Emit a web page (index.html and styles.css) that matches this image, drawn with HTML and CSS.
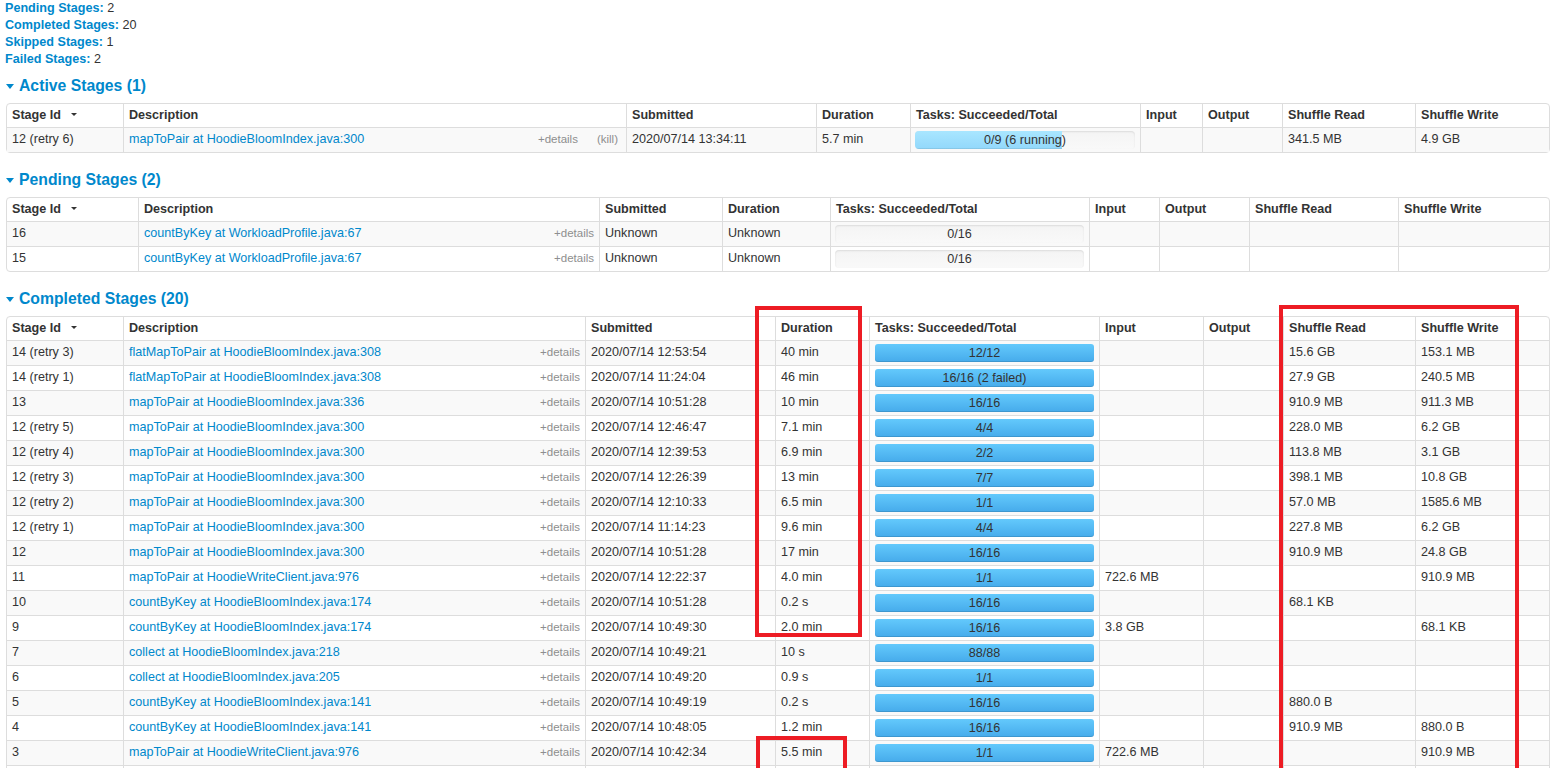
FILE: index.html
```html
<!DOCTYPE html>
<html lang="en">
<head>
<meta charset="utf-8">
<title>Stages</title>
<link rel="stylesheet" href="styles.css">
</head>
<body>
<div class="page">
  <ul class="summary">
    <li><a class="lbl">Pending Stages:</a> 2</li>
    <li><a class="lbl">Completed Stages:</a> 20</li>
    <li><a class="lbl">Skipped Stages:</a> 1</li>
    <li><a class="lbl">Failed Stages:</a> 2</li>
  </ul>

  <h4 class="sec"><span class="caret"></span>Active Stages (1)</h4>
  <table class="stages t-active">
    <thead>
      <tr><th>Stage Id<span class="sort"></span></th><th>Description</th><th>Submitted</th><th>Duration</th><th>Tasks: Succeeded/Total</th><th>Input</th><th>Output</th><th>Shuffle Read</th><th>Shuffle Write</th></tr>
    </thead>
    <tbody>
      <tr><td>12 (retry 6)</td><td class="desc kill-cell"><div class="dw"><a>mapToPair at HoodieBloomIndex.java:300</a><span class="details">+details</span><span class="kill">(kill)</span></div></td><td>2020/07/14 13:34:11</td><td>5.7 min</td><td class="pc"><div class="progress"><div class="fill-run" style="width:66.7%"></div><span class="ptxt">0/9 (6 running)</span></div></td><td></td><td></td><td>341.5 MB</td><td>4.9 GB</td></tr>
    </tbody>
  </table>

  <h4 class="sec"><span class="caret"></span>Pending Stages (2)</h4>
  <table class="stages t-pending">
    <thead>
      <tr><th>Stage Id<span class="sort"></span></th><th>Description</th><th>Submitted</th><th>Duration</th><th>Tasks: Succeeded/Total</th><th>Input</th><th>Output</th><th>Shuffle Read</th><th>Shuffle Write</th></tr>
    </thead>
    <tbody>
      <tr><td>16</td><td class="desc"><div class="dw"><a>countByKey at WorkloadProfile.java:67</a><span class="details">+details</span></div></td><td>Unknown</td><td>Unknown</td><td class="pc"><div class="progress"><span class="ptxt">0/16</span></div></td><td></td><td></td><td></td><td></td></tr>
      <tr><td>15</td><td class="desc"><div class="dw"><a>countByKey at WorkloadProfile.java:67</a><span class="details">+details</span></div></td><td>Unknown</td><td>Unknown</td><td class="pc"><div class="progress"><span class="ptxt">0/16</span></div></td><td></td><td></td><td></td><td></td></tr>
    </tbody>
  </table>

  <h4 class="sec"><span class="caret"></span>Completed Stages (20)</h4>
  <table class="stages t-completed">
    <thead>
      <tr><th>Stage Id<span class="sort"></span></th><th>Description</th><th>Submitted</th><th>Duration</th><th>Tasks: Succeeded/Total</th><th>Input</th><th>Output</th><th>Shuffle Read</th><th>Shuffle Write</th></tr>
    </thead>
    <tbody>
      <tr><td>14 (retry 3)</td><td class="desc"><div class="dw"><a>flatMapToPair at HoodieBloomIndex.java:308</a><span class="details">+details</span></div></td><td>2020/07/14 12:53:54</td><td>40 min</td><td class="pc"><div class="progress done"><span class="ptxt">12/12</span></div></td><td></td><td></td><td>15.6 GB</td><td>153.1 MB</td></tr>
      <tr><td>14 (retry 1)</td><td class="desc"><div class="dw"><a>flatMapToPair at HoodieBloomIndex.java:308</a><span class="details">+details</span></div></td><td>2020/07/14 11:24:04</td><td>46 min</td><td class="pc"><div class="progress done"><span class="ptxt">16/16 (2 failed)</span></div></td><td></td><td></td><td>27.9 GB</td><td>240.5 MB</td></tr>
      <tr><td>13</td><td class="desc"><div class="dw"><a>mapToPair at HoodieBloomIndex.java:336</a><span class="details">+details</span></div></td><td>2020/07/14 10:51:28</td><td>10 min</td><td class="pc"><div class="progress done"><span class="ptxt">16/16</span></div></td><td></td><td></td><td>910.9 MB</td><td>911.3 MB</td></tr>
      <tr><td>12 (retry 5)</td><td class="desc"><div class="dw"><a>mapToPair at HoodieBloomIndex.java:300</a><span class="details">+details</span></div></td><td>2020/07/14 12:46:47</td><td>7.1 min</td><td class="pc"><div class="progress done"><span class="ptxt">4/4</span></div></td><td></td><td></td><td>228.0 MB</td><td>6.2 GB</td></tr>
      <tr><td>12 (retry 4)</td><td class="desc"><div class="dw"><a>mapToPair at HoodieBloomIndex.java:300</a><span class="details">+details</span></div></td><td>2020/07/14 12:39:53</td><td>6.9 min</td><td class="pc"><div class="progress done"><span class="ptxt">2/2</span></div></td><td></td><td></td><td>113.8 MB</td><td>3.1 GB</td></tr>
      <tr><td>12 (retry 3)</td><td class="desc"><div class="dw"><a>mapToPair at HoodieBloomIndex.java:300</a><span class="details">+details</span></div></td><td>2020/07/14 12:26:39</td><td>13 min</td><td class="pc"><div class="progress done"><span class="ptxt">7/7</span></div></td><td></td><td></td><td>398.1 MB</td><td>10.8 GB</td></tr>
      <tr><td>12 (retry 2)</td><td class="desc"><div class="dw"><a>mapToPair at HoodieBloomIndex.java:300</a><span class="details">+details</span></div></td><td>2020/07/14 12:10:33</td><td>6.5 min</td><td class="pc"><div class="progress done"><span class="ptxt">1/1</span></div></td><td></td><td></td><td>57.0 MB</td><td>1585.6 MB</td></tr>
      <tr><td>12 (retry 1)</td><td class="desc"><div class="dw"><a>mapToPair at HoodieBloomIndex.java:300</a><span class="details">+details</span></div></td><td>2020/07/14 11:14:23</td><td>9.6 min</td><td class="pc"><div class="progress done"><span class="ptxt">4/4</span></div></td><td></td><td></td><td>227.8 MB</td><td>6.2 GB</td></tr>
      <tr><td>12</td><td class="desc"><div class="dw"><a>mapToPair at HoodieBloomIndex.java:300</a><span class="details">+details</span></div></td><td>2020/07/14 10:51:28</td><td>17 min</td><td class="pc"><div class="progress done"><span class="ptxt">16/16</span></div></td><td></td><td></td><td>910.9 MB</td><td>24.8 GB</td></tr>
      <tr><td>11</td><td class="desc"><div class="dw"><a>mapToPair at HoodieWriteClient.java:976</a><span class="details">+details</span></div></td><td>2020/07/14 12:22:37</td><td>4.0 min</td><td class="pc"><div class="progress done"><span class="ptxt">1/1</span></div></td><td>722.6 MB</td><td></td><td></td><td>910.9 MB</td></tr>
      <tr><td>10</td><td class="desc"><div class="dw"><a>countByKey at HoodieBloomIndex.java:174</a><span class="details">+details</span></div></td><td>2020/07/14 10:51:28</td><td>0.2 s</td><td class="pc"><div class="progress done"><span class="ptxt">16/16</span></div></td><td></td><td></td><td>68.1 KB</td><td></td></tr>
      <tr><td>9</td><td class="desc"><div class="dw"><a>countByKey at HoodieBloomIndex.java:174</a><span class="details">+details</span></div></td><td>2020/07/14 10:49:30</td><td>2.0 min</td><td class="pc"><div class="progress done"><span class="ptxt">16/16</span></div></td><td>3.8 GB</td><td></td><td></td><td>68.1 KB</td></tr>
      <tr><td>7</td><td class="desc"><div class="dw"><a>collect at HoodieBloomIndex.java:218</a><span class="details">+details</span></div></td><td>2020/07/14 10:49:21</td><td>10 s</td><td class="pc"><div class="progress done"><span class="ptxt">88/88</span></div></td><td></td><td></td><td></td><td></td></tr>
      <tr><td>6</td><td class="desc"><div class="dw"><a>collect at HoodieBloomIndex.java:205</a><span class="details">+details</span></div></td><td>2020/07/14 10:49:20</td><td>0.9 s</td><td class="pc"><div class="progress done"><span class="ptxt">1/1</span></div></td><td></td><td></td><td></td><td></td></tr>
      <tr><td>5</td><td class="desc"><div class="dw"><a>countByKey at HoodieBloomIndex.java:141</a><span class="details">+details</span></div></td><td>2020/07/14 10:49:19</td><td>0.2 s</td><td class="pc"><div class="progress done"><span class="ptxt">16/16</span></div></td><td></td><td></td><td>880.0 B</td><td></td></tr>
      <tr><td>4</td><td class="desc"><div class="dw"><a>countByKey at HoodieBloomIndex.java:141</a><span class="details">+details</span></div></td><td>2020/07/14 10:48:05</td><td>1.2 min</td><td class="pc"><div class="progress done"><span class="ptxt">16/16</span></div></td><td></td><td></td><td>910.9 MB</td><td>880.0 B</td></tr>
      <tr><td>3</td><td class="desc"><div class="dw"><a>mapToPair at HoodieWriteClient.java:976</a><span class="details">+details</span></div></td><td>2020/07/14 10:42:34</td><td>5.5 min</td><td class="pc"><div class="progress done"><span class="ptxt">1/1</span></div></td><td>722.6 MB</td><td></td><td></td><td>910.9 MB</td></tr>
      <tr class="tail"><td></td><td></td><td></td><td></td><td></td><td></td><td></td><td></td><td></td></tr>
    </tbody>
  </table>

  <div class="mark mark-dur"></div>
  <div class="mark mark-dur2"></div>
  <div class="mark mark-shuffle"></div>
</div>
</body>
</html>
```
FILE: styles.css
```css
* { box-sizing: border-box; }
html, body { margin: 0; padding: 0; overflow: hidden; background: #fff; }
body {
  font-family: "Liberation Sans", Arial, Helvetica, sans-serif;
  font-size: 12.6px;
  color: #333;
}
.page { position: relative; padding: 0 2px 0 6px; }

a { color: #0088cc; text-decoration: none; }

.summary { list-style: none; margin: 0 0 7px; padding: 0; }
.summary li { line-height: 17px; margin-left: -1px; }
.summary .lbl { font-weight: bold; }

.sec {
  margin: 0 0 7px;
  padding-top: 1px;
  font-size: 15.75px;
  line-height: 20px;
  font-weight: bold;
  color: #0088cc;
  display: flex;
  align-items: center;
}
.caret {
  display: inline-block;
  width: 0; height: 0;
  border-left: 4px solid transparent;
  border-right: 4px solid transparent;
  border-top: 5px solid #0088cc;
  margin: 1px 5px 0 0;
}

.stages {
  width: 1544px;
  table-layout: fixed;
  border-collapse: separate;
  border-spacing: 0;
  border: 1px solid #ddd;
  border-radius: 4px;
  margin-bottom: 16px;
}
.stages th, .stages td {
  border-left: 1px solid #ddd;
  border-top: 1px solid #ddd;
  text-align: left;
  vertical-align: top;
  white-space: nowrap;
  overflow: hidden;
}
.stages th:first-child, .stages td:first-child { border-left: 0; }
.stages thead tr:first-child th { border-top: 0; }
.stages th { padding: 4px 5px; line-height: 15px; font-weight: bold; }
.stages td { padding: 3px 5px 5px; line-height: 16px; }
.stages tbody tr:nth-child(odd) td { background: #f9f9f9; }
.stages tr.tail td { height: 25px; }

.sort {
  display: inline-block;
  width: 0; height: 0;
  border-left: 3px solid transparent;
  border-right: 3px solid transparent;
  border-top: 3.5px solid #333;
  margin: 0 0 2px 10px;
  vertical-align: middle;
}

.t-active th:nth-child(1), .t-completed th:nth-child(1) { width: 116px; }
.t-active th:nth-child(2) { width: 503px; }
.t-completed th:nth-child(2) { width: 462px; }
.t-active th:nth-child(3), .t-completed th:nth-child(3) { width: 190px; }
.t-active th:nth-child(4), .t-completed th:nth-child(4) { width: 94px; }
.t-active th:nth-child(5), .t-completed th:nth-child(5) { width: 230px; }
.t-active th:nth-child(6) { width: 62px; }
.t-completed th:nth-child(6) { width: 104px; }
.t-active th:nth-child(7), .t-completed th:nth-child(7) { width: 80px; }
.t-active th:nth-child(8) { width: 133px; }
.t-completed th:nth-child(8) { width: 132px; }
.t-active th:nth-child(9), .t-completed th:nth-child(9) { width: 134px; }

.t-pending th:nth-child(1) { width: 131px; }
.t-pending th:nth-child(2) { width: 461px; }
.t-pending th:nth-child(3) { width: 123px; }
.t-pending th:nth-child(4) { width: 108px; }
.t-pending th:nth-child(5) { width: 259px; }
.t-pending th:nth-child(6) { width: 70px; }
.t-pending th:nth-child(7) { width: 90px; }
.t-pending th:nth-child(8) { width: 149px; }
.t-pending th:nth-child(9) { width: 151px; }

.dw { display: flex; align-items: baseline; }
.dw a { flex: none; }
.details {
  margin-left: auto;
  font-size: 11.5px;
  color: #8e8e8e;
}
.kill { margin-left: 19px; font-size: 11.5px; color: #8e8e8e; }
.stages td.kill-cell { padding-right: 8px; }

.stages td.pc { padding: 3px 5px 3px 4px; }
.progress {
  position: relative;
  height: 18px;
  border-radius: 4px;
  background: linear-gradient(#f4f4f4, #f9f9f9);
  box-shadow: inset 0 1px 2px rgba(0,0,0,0.1);
  text-align: center;
  overflow: hidden;
}
.t-completed .progress { margin-left: 1px; }
.progress.done {
  background: linear-gradient(#63c9fc, #46abeb);
  box-shadow: inset 0 -1px 0 rgba(0,0,0,0.12);
  border-radius: 3px;
}
.fill-run {
  position: absolute;
  left: 0; top: 0; bottom: 0;
  background: linear-gradient(#a9e6ff, #92d8fb);
  box-shadow: inset 0 -1px 0 rgba(0,0,0,0.08);
}
.ptxt {
  position: relative;
  line-height: 18px;
  color: #333;
}

.mark {
  position: absolute;
  border: 4px solid #ed1c24;
  pointer-events: none;
}
.mark-dur { left: 755px; top: 306px; width: 107px; height: 331px; }
.mark-dur2 { left: 756px; top: 736px; width: 91px; height: 60px; }
.mark-shuffle { left: 1279px; top: 305px; width: 240px; height: 500px; }
```
